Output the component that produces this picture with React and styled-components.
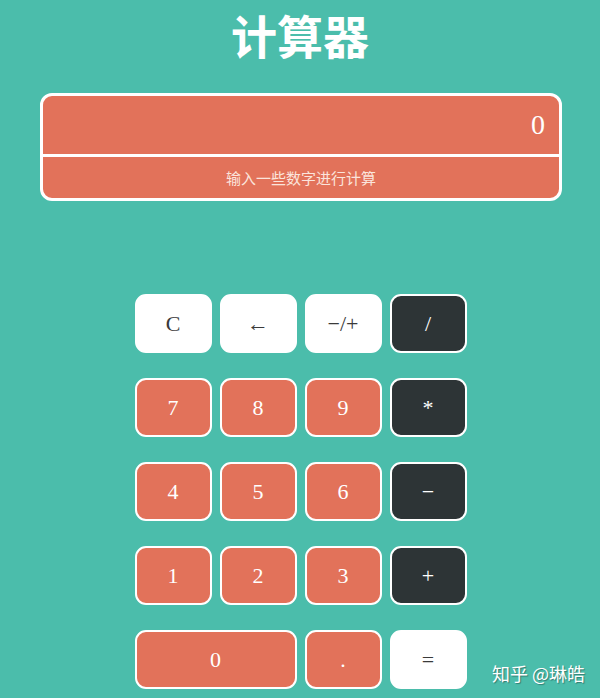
import styled, { createGlobalStyle } from 'styled-components';

const GlobalStyle = createGlobalStyle`
    body {
        margin: 0;
        background-color: #4bbdab;
        font-family: "Liberation Serif", "Noto Sans CJK SC", serif;
    }
`

const Page = styled.div`
    position: relative;
    height: 698px;
    overflow: hidden;
`
const Title = styled.h1`
    margin: 0;
    padding-top: 2px;
    text-align: center;
    font-family: "Noto Sans CJK SC", sans-serif;
    font-size: 46px;
    font-weight: 700;
    line-height: 64px;
    color: #ffffff;
`
const Display = styled.div`
    margin: 27px 38px 0 40px;
    border: 3px solid #ffffff;
    border-radius: 12px;
    background-color: #e2725a;
    overflow: hidden;
`
const Result = styled.div`
    height: 58px;
    padding-right: 14px;
    display: flex;
    align-items: center;
    justify-content: flex-end;
    font-size: 28px;
    color: #ffffff;
`
const Hint = styled.div`
    height: 41px;
    border-top: 3px solid #ffffff;
    display: flex;
    align-items: center;
    justify-content: center;
    font-family: "Noto Sans CJK SC", sans-serif;
    font-size: 15px;
    color: #fbe4dc;
`
const Keypad = styled.div`
    margin: 93px auto 0;
    width: 333px;
    display: grid;
    grid-template-columns: repeat(4, 77px);
    grid-auto-rows: 59px;
    column-gap: 8px;
    row-gap: 25px;
    transform: translateX(1px);
`
const colors = {
    light: { bg: '#ffffff', fg: '#3a3a3a' },
    num: { bg: '#e2725a', fg: '#ffffff' },
    op: { bg: '#2d3436', fg: '#ffffff' },
}
const Key = styled.button`
    grid-column: span ${({ span }) => span || 1};
    border: 2px solid #ffffff;
    border-radius: 11px;
    background-color: ${({ kind }) => colors[kind].bg};
    color: ${({ kind }) => colors[kind].fg};
    font-family: "Liberation Serif", "DejaVu Serif", serif;
    font-size: 22px;
    padding: 0;
    cursor: pointer;
`
const Watermark = styled.div`
    position: absolute;
    right: 15px;
    bottom: 12px;
    font-family: "Noto Sans CJK SC", sans-serif;
    font-size: 18px;
    color: #ffffff;
    text-shadow: 1px 1px 1px rgba(0, 0, 0, 0.35);
`

const keys = [
    ['C', 'light'], ['←', 'light'], ['−/+', 'light'], ['/', 'op'],
    ['7', 'num'], ['8', 'num'], ['9', 'num'], ['*', 'op'],
    ['4', 'num'], ['5', 'num'], ['6', 'num'], ['−', 'op'],
    ['1', 'num'], ['2', 'num'], ['3', 'num'], ['+', 'op'],
    ['0', 'num', 2], ['.', 'num'], ['=', 'light'],
]

export default function App() {
    return (
        <Page>
            <GlobalStyle />
            <Title>计算器</Title>
            <Display>
                <Result>0</Result>
                <Hint>输入一些数字进行计算</Hint>
            </Display>
            <Keypad>
                {keys.map(([label, kind, span]) => (
                    <Key key={label} kind={kind} span={span}>{label}</Key>
                ))}
            </Keypad>
            <Watermark>知乎 @琳皓</Watermark>
        </Page>
    )
}
